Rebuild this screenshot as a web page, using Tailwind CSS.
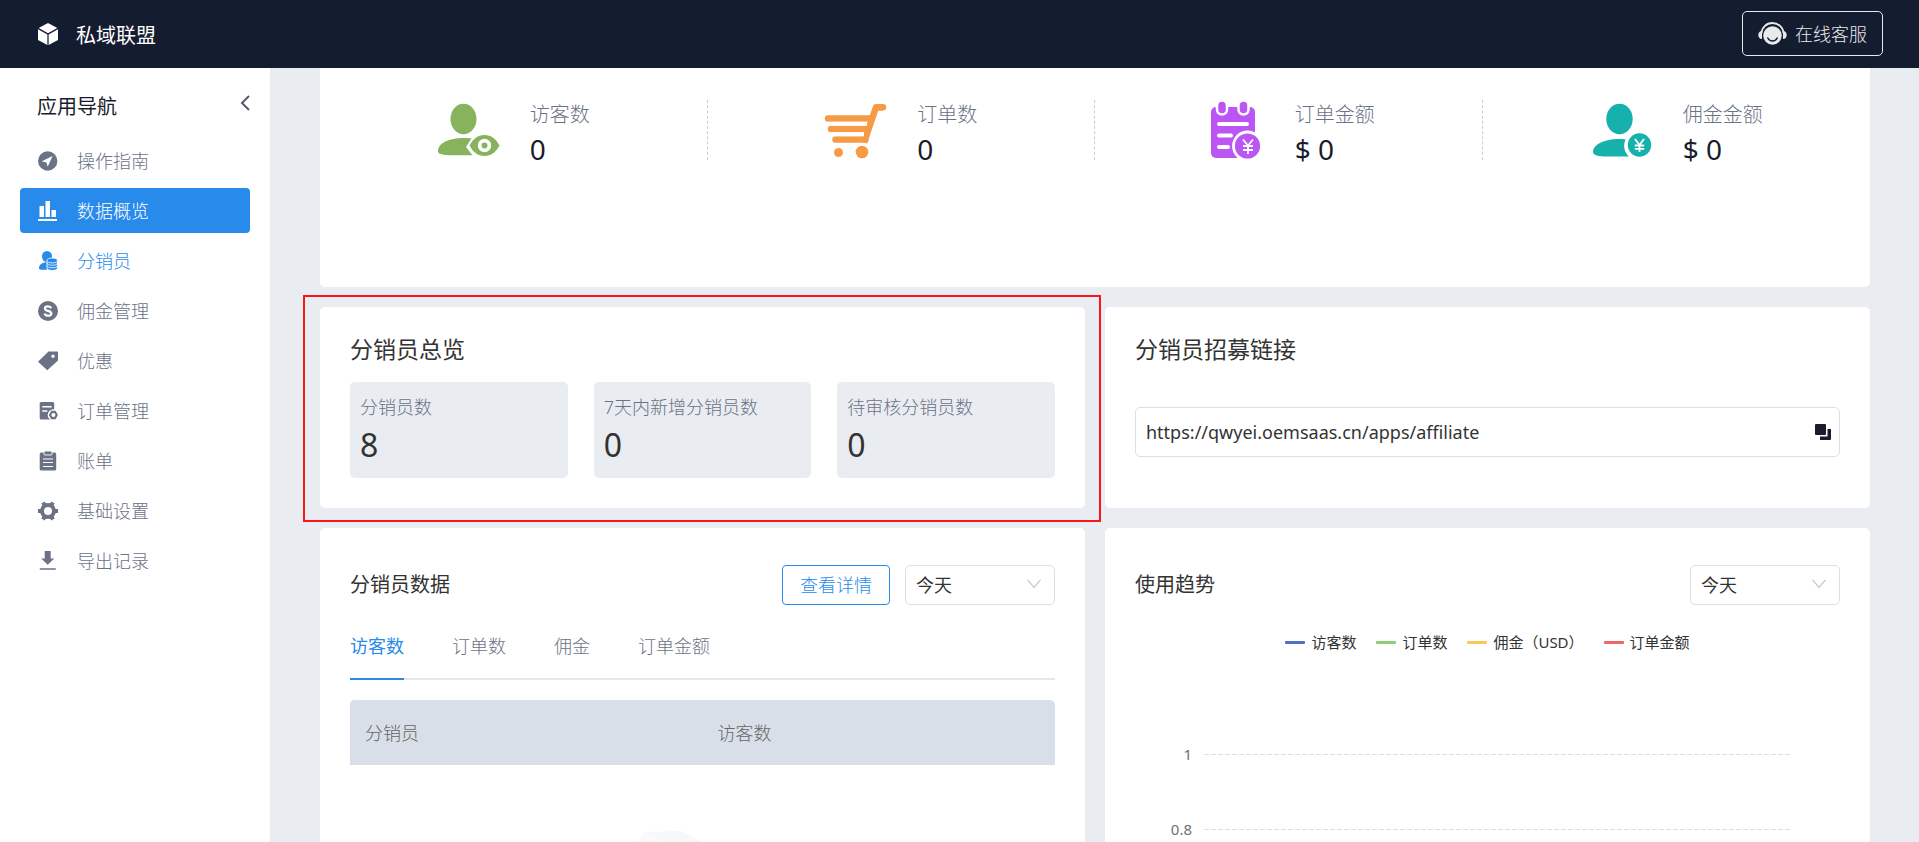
<!DOCTYPE html>
<html lang="zh-CN">
<head>
<meta charset="utf-8">
<meta name="viewport" content="width=device-width, initial-scale=1">
<title>私域联盟</title>
<script src="https://cdn.jsdelivr.net/npm/@tailwindcss/browser@4"></script>
</head>
<body class="h-screen overflow-hidden flex flex-col bg-[#e9edf2] text-[#333] text-[18px] leading-6 font-['Noto_Sans','Noto_Sans_CJK_SC',sans-serif]">

<header class="h-[68px] shrink-0 bg-[#141c30] flex items-center justify-between pl-[38px] pr-9 pb-px">
  <div class="flex items-center gap-[18px] text-white">
    <svg class="w-5 h-[22px]" viewBox="0 0 20 22" fill="currentColor"><path d="M10 0 19.3 5 10 10.200.7 5z"/><path d="M0 6.300 9.400 11.500V22L0 17z"/><path d="M20 6.300 10.600 11.500V22L20 17z"/></svg>
    <span class="text-[20px] leading-6 pt-1">私域联盟</span>
  </div>
  <button class="h-[45px] border border-[#e8e9eb] rounded-[5px] px-[15px] flex items-center gap-2 text-[#e8e9eb] font-light">
    <svg class="w-[29px] h-[24px]" viewBox="0 0 29 24"><circle cx="14.500" cy="13.500" r="9.300" fill="#e8e9eb"/><path d="M3.500 11.500a11 10.500 0 0 1 22 0" fill="none" stroke="#e8e9eb" stroke-width="1.800"/><path d="M4 9v8C1.500 17 .3 15.300.3 13S1.500 9 4 9zM25 9v8c2.500 0 3.700-1.700 3.700-4S27.500 9 25 9z" fill="#e8e9eb"/><path d="M9.800 16c2 4 7.400 4 9.400 0" fill="none" stroke="#141c30" stroke-width="1.500" stroke-linecap="round"/></svg>
    <span>在线客服</span>
  </button>
</header>

<div class="flex flex-1 min-h-0">
  <aside class="w-[270px] shrink-0 bg-white px-5">
    <div class="h-[70px] flex items-center justify-between pl-[17px] pt-1">
      <h2 class="text-[20px] text-[#1b1c2b] pt-[3px]">应用导航</h2>
      <button class="pb-1" aria-label="收起"><svg class="w-[10px] h-4" viewBox="0 0 10 16" fill="none" stroke="#555b70" stroke-width="2"><path d="M9 1 2 8l7 7"/></svg></button>
    </div>
    <nav class="flex flex-col gap-[5px] text-[#6b7285] font-light">
      <a href="#" class="h-[45px] rounded-[4px] pl-[18px] flex items-center gap-[19px]">
        <svg class="w-5 h-5" viewBox="0 0 20 20"><circle cx="9.700" cy="10" r="9.700" fill="currentColor"/><path d="M14.600 5 3.800 10.200l4.600 1.200 1.300 4.400z" fill="#fff"/></svg><span>操作指南</span></a>
      <a href="#" class="h-[45px] rounded-[4px] pl-[18px] flex items-center gap-[19px] bg-[#288aeb] text-white">
        <svg class="w-5 h-5" viewBox="0 0 20 20" fill="currentColor"><path d="M1.500 5h4.500v11H1.500zM7.500 0h4.500v16H7.500zM13.500 9h4.500v7h-4.500zM0 18h19v2H0z"/></svg><span>数据概览</span></a>
      <a href="#" class="h-[45px] rounded-[4px] pl-[18px] flex items-center gap-[19px] text-[#288aeb]">
        <svg class="w-5 h-5" viewBox="0 0 20 20" fill="currentColor"><ellipse cx="9" cy="5.500" rx="5" ry="5.500"/><path d="M7 11.500c-4 .5-6 3-6 5.500 0 1 .5 1.700 2 1.700h6v-8z"/><g stroke="#fff" stroke-width=".8"><path d="M9 9.500v7.500c0 3.300 10.500 3.300 10.500 0V9.500z"/><ellipse cx="14.200" cy="9.500" rx="5.200" ry="2.400"/><path fill="none" d="M9 12c0 3 10.500 3 10.500 0M9 14.500c0 3 10.500 3 10.500 0"/></g></svg><span>分销员</span></a>
      <a href="#" class="h-[45px] rounded-[4px] pl-[18px] flex items-center gap-[19px]">
        <svg class="w-5 h-5" viewBox="0 0 20 20"><circle cx="10" cy="10" r="10" fill="currentColor"/><path d="M13.200 7.200C12.600 5.800 11.500 5.300 10 5.300c-1.900 0-3.100.9-3.100 2.200 0 3.300 6.400 1.500 6.400 4.900 0 1.400-1.300 2.300-3.300 2.300-1.700 0-2.900-.7-3.400-2.100" fill="none" stroke="#fff" stroke-width="2.200"/></svg><span>佣金管理</span></a>
      <a href="#" class="h-[45px] rounded-[4px] pl-[18px] flex items-center gap-[19px]">
        <svg class="w-5 h-5" viewBox="0 0 20 20"><path fill="currentColor" fill-rule="evenodd" d="M10.500.5H19a1 1 0 0 1 1 1V9.500L9.300 19.200 0 10.700zM15 3.600a1.700 1.700 0 1 0 0 3.400 1.700 1.700 0 0 0 0-3.400z"/></svg><span>优惠</span></a>
      <a href="#" class="h-[45px] rounded-[4px] pl-[18px] flex items-center gap-[19px]">
        <svg class="w-5 h-5" viewBox="0 0 20 20"><rect x="1.700" y="1" width="14.500" height="17.500" rx="1.500" fill="currentColor"/><path d="M4.300 5.800h9.300M4.300 10h5" stroke="#fff" stroke-width="1.600"/><circle cx="15.500" cy="14" r="5.800" fill="#fff"/><path fill="currentColor" fill-rule="evenodd" d="M13.200 9.800h4.400l2.300 4.200-2.300 4.200h-4.400L10.900 14zM15.400 12a2 2 0 1 0 0 4 2 2 0 0 0 0-4z"/></svg><span>订单管理</span></a>
      <a href="#" class="h-[45px] rounded-[4px] pl-[18px] flex items-center gap-[19px]">
        <svg class="w-5 h-5" viewBox="0 0 20 20"><rect x="1.700" y="1.500" width="16.500" height="18" rx="1.500" fill="currentColor"/><rect x="6" y="0" width="8" height="4" rx="1" fill="currentColor" stroke="#fff" stroke-width=".9"/><path d="M5 8h10M5 11.500h10M5 15.500h10" stroke="#fff" stroke-width="1.200"/></svg><span>账单</span></a>
      <a href="#" class="h-[45px] rounded-[4px] pl-[18px] flex items-center gap-[19px]">
        <svg class="w-5 h-5" viewBox="0 0 20 20"><circle cx="10" cy="10" r="6" fill="none" stroke="currentColor" stroke-width="4"/><path d="M0 10h3M17 10h3M5 1.400 6.500 4M13.500 16 15 18.600M15 1.400 13.500 4M6.500 16 5 18.600" stroke="currentColor" stroke-width="4"/></svg><span>基础设置</span></a>
      <a href="#" class="h-[45px] rounded-[4px] pl-[18px] flex items-center gap-[19px]">
        <svg class="w-5 h-5" viewBox="0 0 20 20" fill="currentColor"><path d="M6.700 0h6v7.500h3.600L9.700 13.800 3.200 7.500h3.500z"/><path d="M1.800 17h16v2h-16z" opacity=".75"/></svg><span>导出记录</span></a>
    </nav>
  </aside>

  <main class="flex-1 min-w-0 overflow-hidden pl-[50px] pr-[49px] flex flex-col gap-5">
    <section class="shrink-0 h-[219px] bg-white rounded-b-[5px] pt-8 grid grid-cols-4 items-start text-[20px] text-[#6b7285]">
      <div class="h-[60px] flex items-center justify-center gap-[29px] border-r border-dashed border-[#ccc]">
        <svg class="w-16 h-16" viewBox="0 0 64 64" fill="#86b35b"><ellipse cx="26.500" cy="21" rx="13" ry="15.200"/><path d="M27 40C12 40 1 45 1 53.500c0 2.600 5 3.700 14 3.700h20.500L29 49l5.500-8.500C32 40 29.500 40 27 40z"/><path fill-rule="evenodd" d="M32.500 47.500C36 41 41 37 47.500 37S59 41 62.500 47.500C59 54 54 58 47.500 58S36 54 32.500 47.500zM47.500 40.800a6.700 6.700 0 1 0 0 13.400 6.700 6.700 0 0 0 0-13.400z"/><circle cx="47.500" cy="47.500" r="3"/></svg>
        <div class="flex flex-col gap-[6px] pt-1"><span class="leading-7 font-light">访客数</span><span class="text-[28px] leading-7 text-[#1b1c2b]">0</span></div>
      </div>
      <div class="h-[60px] flex items-center justify-center gap-[29px] border-r border-dashed border-[#ccc]">
        <svg class="w-16 h-16" viewBox="0 0 64 64"><g fill="none" stroke="#f69a45" stroke-linecap="round"><path stroke-width="6.500" d="M4 20.500h42M7 31h36M11.500 41.500h30"/><path stroke-width="6.500" stroke-linejoin="round" stroke-linecap="butt" d="M40 44.500 52 9.200h7"/><path stroke-width="6.500" d="M53 9.200h6"/></g><path stroke="#fff" stroke-width="4" d="M4 25.700h39M6 36.300h34"/><circle cx="14.500" cy="54.500" r="4.500" fill="#f69a45"/><circle cx="38" cy="54" r="6.300" fill="#f69a45"/></svg>
        <div class="flex flex-col gap-[6px] pt-1"><span class="leading-7 font-light">订单数</span><span class="text-[28px] leading-7 text-[#1b1c2b]">0</span></div>
      </div>
      <div class="h-[60px] flex items-center justify-center gap-[29px] border-r border-dashed border-[#ccc]">
        <svg class="w-16 h-16" viewBox="0 0 64 64"><rect x="9" y="9" width="44" height="51" rx="5" fill="#bb56f5"/><path stroke="#fff" stroke-width="4" stroke-linecap="round" d="M17 26h28M17 37.500h12M17 49h9"/><g fill="#bb56f5" stroke="#fff" stroke-width="2.500"><rect x="15" y="2.500" width="10" height="14" rx="5"/><rect x="36.500" y="2.500" width="10" height="14" rx="5"/></g><circle cx="45.500" cy="48" r="14" fill="#bb56f5" stroke="#fff" stroke-width="2.800"/><path d="m41 41.500 5 6 5-6M46 47.500V56M41 48h10M41 52h10" fill="none" stroke="#fff" stroke-width="1.800"/></svg>
        <div class="flex flex-col gap-[6px] pt-1"><span class="leading-7 font-light">订单金额</span><span class="text-[28px] leading-7 text-[#1b1c2b]">$ 0</span></div>
      </div>
      <div class="h-[60px] flex items-center justify-center gap-[29px]">
        <svg class="w-16 h-16" viewBox="0 0 64 64"><g fill="#16b0ad"><ellipse cx="29.500" cy="21" rx="13.200" ry="15.200"/><path d="M29.500 41C14.500 41 3 46.500 3 54c0 3 5 4.600 14 4.600h22c-5-5-6-11-3.500-17.400z"/><circle cx="49.500" cy="47" r="11.700"/></g><path d="m45 41 4.500 6 4.500-6M49.500 47v7M44.800 47.500h9.400M44.800 50.800h9.400" fill="none" stroke="#fff" stroke-width="1.800"/></svg>
        <div class="flex flex-col gap-[6px] pt-1"><span class="leading-7 font-light">佣金金额</span><span class="text-[28px] leading-7 text-[#1b1c2b]">$ 0</span></div>
      </div>
    </section>

    <div class="shrink-0 grid grid-cols-2 gap-5">
      <section class="relative bg-white rounded-[5px] p-[30px] pt-[27px]">
        <div class="absolute -left-[17px] -right-4 -top-3 -bottom-[14px] border-2 border-[#f91616] pointer-events-none"></div>
        <h2 class="text-[23px] leading-[30px]">分销员总览</h2>
        <div class="mt-[18px] grid grid-cols-3 gap-[26px]">
          <div class="h-24 bg-[#e9edf2] rounded-[5px] px-[10px] pt-[11px]"><div class="leading-7 text-[#6b7285] font-light">分销员数</div><div class="text-[32px] leading-[48px]">8</div></div>
          <div class="h-24 bg-[#e9edf2] rounded-[5px] px-[10px] pt-[11px]"><div class="leading-7 text-[#6b7285] font-light">7天内新增分销员数</div><div class="text-[32px] leading-[48px]">0</div></div>
          <div class="h-24 bg-[#e9edf2] rounded-[5px] px-[10px] pt-[11px]"><div class="leading-7 text-[#6b7285] font-light">待审核分销员数</div><div class="text-[32px] leading-[48px]">0</div></div>
        </div>
      </section>
      <section class="bg-white rounded-[5px] p-[30px] pt-[27px]">
        <h2 class="text-[23px] leading-[30px]"><label for="link">分销员招募链接</label></h2>
        <div class="mt-[43px] h-[50px] border border-[#dcdfe8] rounded-[5px] pl-[10px] pr-2 flex items-center">
          <input id="link" type="text" readonly value="https://qwyei.oemsaas.cn/apps/affiliate" class="flex-1 min-w-0 bg-transparent outline-none">
          <button aria-label="复制"><svg class="w-4 h-4" viewBox="0 0 16 16" fill="#1b1c2b"><rect width="11" height="11" rx="1"/><path d="M12.500 5H16v10a1 1 0 0 1-1 1H5v-3.500h7.500z"/></svg></button>
        </div>
      </section>
    </div>

    <div class="shrink-0 grid grid-cols-2 gap-5">
      <section class="bg-white rounded-[5px] px-[30px] pt-[37px]">
        <div class="flex items-center justify-between">
          <h3 class="text-[20px]">分销员数据</h3>
          <div class="flex gap-[15px]">
            <button class="h-10 px-[17px] border border-[#288aeb] rounded-[4px] text-[#288aeb] font-light">查看详情</button>
            <div class="relative w-[150px]">
              <select aria-label="时间范围" class="appearance-none w-full h-10 border border-[#dcdfe8] rounded-[5px] pl-[10px] bg-white"><option>今天</option></select>
              <svg class="absolute right-[14px] top-[14px] w-[14px] h-[10px] pointer-events-none" viewBox="0 0 14 10" fill="none" stroke="#c0c4cc" stroke-width="1.200"><path d="m.5.8 6.500 7.500L13.500.8"/></svg>
            </div>
          </div>
        </div>
        <div role="tablist" class="mt-[29px] flex items-start gap-12 border-b-2 border-[#e4e7ed] text-[#6b7285] font-light">
          <button role="tab" aria-selected="true" class="pb-[20px] -mb-[2px] border-b-2 border-[#288aeb] text-[#288aeb] font-normal">访客数</button>
          <button role="tab">订单数</button>
          <button role="tab">佣金</button>
          <button role="tab">订单金额</button>
        </div>
        <table class="mt-5 w-full table-fixed text-left text-[#666]">
          <thead><tr class="h-[65px] bg-[#d9dfe8]"><th class="pl-[15px] font-light rounded-tl-[5px] bg-[#d9dfe8]">分销员</th><th class="pl-[15px] font-light rounded-tr-[5px]">访客数</th></tr></thead>
        </table>
        <svg class="mt-[66px] mx-auto w-[132px] h-20" viewBox="0 0 132 80"><path d="M7 1 44 0l30 16L60 80H0V14z" fill="#f7f8fa"/><path d="m7 1 40 20-10 59H0V14z" fill="#fafafc"/></svg>
      </section>

      <section class="bg-white rounded-[5px] px-[30px] pt-[37px]">
        <div class="flex items-center justify-between">
          <h3 class="text-[20px]">使用趋势</h3>
          <div class="relative w-[150px]">
            <select aria-label="趋势时间范围" class="appearance-none w-full h-10 border border-[#dcdfe8] rounded-[5px] pl-[10px] bg-white"><option>今天</option></select>
            <svg class="absolute right-[14px] top-[14px] w-[14px] h-[10px] pointer-events-none" viewBox="0 0 14 10" fill="none" stroke="#c0c4cc" stroke-width="1.200"><path d="m.5.8 6.500 7.500L13.500.8"/></svg>
          </div>
        </div>
        <ul class="mt-[25px] flex justify-center gap-5 text-[15px]">
          <li class="flex items-center gap-[6px]"><i class="w-5 h-[3px] rounded-[1px] bg-[#5470c6]"></i>访客数</li>
          <li class="flex items-center gap-[6px]"><i class="w-5 h-[3px] rounded-[1px] bg-[#91cc75]"></i>订单数</li>
          <li class="flex items-center gap-[6px]"><i class="w-5 h-[3px] rounded-[1px] bg-[#fac858]"></i>佣金（USD）</li>
          <li class="flex items-center gap-[6px]"><i class="w-5 h-[3px] rounded-[1px] bg-[#ee6666]"></i>订单金额</li>
        </ul>
        <div class="mt-[88px] pr-[50px] flex flex-col gap-[51px] text-[15px] text-[#6e7079]">
          <div class="flex items-center gap-3"><span class="w-[57px] text-right">1</span><i class="flex-1 h-px bg-[repeating-linear-gradient(90deg,#d9dfea_0_5px,transparent_5px_7px)]"></i></div>
          <div class="flex items-center gap-3"><span class="w-[57px] text-right">0.8</span><i class="flex-1 h-px bg-[repeating-linear-gradient(90deg,#d9dfea_0_5px,transparent_5px_7px)]"></i></div>
        </div>
      </section>
    </div>
  </main>
</div>
</body>
</html>
